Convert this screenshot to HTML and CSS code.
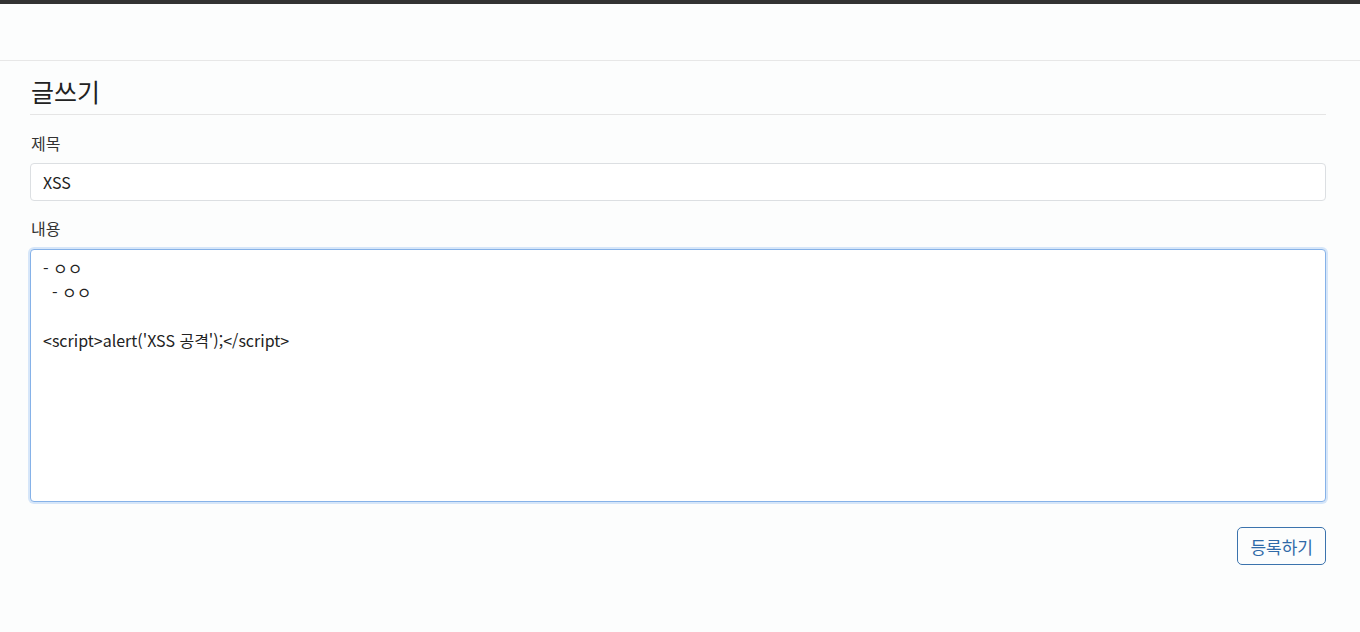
FILE: index.html
```html
<!DOCTYPE html>
<html lang="ko">
<head>
<meta charset="utf-8">
<title>글쓰기</title>
<link rel="stylesheet" href="styles.css">
</head>
<body>
<div class="topbar"></div>
<header class="nav"></header>
<main class="container">
  <h2 class="title">글쓰기</h2>
  <form class="form">
    <div class="group">
      <label class="label" for="t">제목</label>
      <input class="input" id="t" type="text" value="XSS">
    </div>
    <div class="group">
      <label class="label" for="c">내용</label>
      <textarea class="textarea" id="c">- ㅇㅇ
  - ㅇㅇ

&lt;script&gt;alert('XSS 공격');&lt;/script&gt;</textarea>
    </div>
    <div class="actions">
      <button type="button" class="btn">등록하기</button>
    </div>
  </form>
</main>
</body>
</html>
```
FILE: styles.css
```css
html, body {
  margin: 0;
  padding: 0;
  background: #fcfdfd;
  font-family: "Noto Sans CJK KR", "Noto Sans", sans-serif;
  color: #222;
}
.topbar {
  height: 4px;
  background: #333;
}
.nav {
  height: 56px;
  border-bottom: 1px solid #e7e7e7;
}
.container {
  padding: 0 34px 0 30px;
}
.title {
  margin: 0;
  padding: 13px 0 6px 1px;
  font-size: 25px;
  font-weight: 400;
  line-height: 34px;
  border-bottom: 1px solid #e5e5e5;
  color: #222;
}
.form {
  display: flex;
  flex-direction: column;
}
.group {
  display: flex;
  flex-direction: column;
}
.label {
  font-size: 16px;
  line-height: 22px;
  margin: 17px 0 9px 1px;
  color: #333;
}
.group + .group .label {
  margin-top: 16px;
  margin-bottom: 10px;
}
.input {
  box-sizing: border-box;
  height: 38px;
  border: 1px solid #dcdfe2;
  border-radius: 4px;
  background: #fff;
  padding: 0 12px;
  font-family: inherit;
  font-size: 16px;
  color: #222;
  outline: none;
}
.textarea {
  box-sizing: border-box;
  height: 253px;
  border: 1px solid #86b2e8;
  border-radius: 4px;
  box-shadow: 0 0 0 2px #d6e6f9;
  background: #fff;
  padding: 6px 12px;
  font-family: inherit;
  font-size: 16px;
  line-height: 24px;
  color: #222;
  resize: none;
  outline: none;
}
.actions {
  display: flex;
  justify-content: flex-end;
  margin-top: 25px;
}
.btn {
  height: 38px;
  padding: 0 12px;
  border: 1px solid #3b73ad;
  border-radius: 5px;
  background: transparent;
  color: #2f6aa8;
  font-family: inherit;
  font-size: 17px;
  cursor: pointer;
}
```
